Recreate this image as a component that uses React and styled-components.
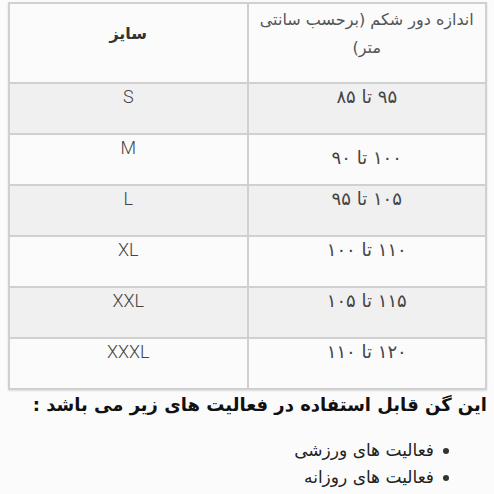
import React from 'react';
import styled, { createGlobalStyle } from 'styled-components';

const GlobalStyle = createGlobalStyle`
  html, body {
    margin: 0;
    padding: 0;
    background: #fbfbfb;
  }
  body {
    font-family: "DejaVu Sans", "Noto Sans", sans-serif;
  }
`;

const Page = styled.div`
  direction: rtl;
  padding: 2px 7px 0 8px;
  color: #222;
`;

const SizeTable = styled.table`
  width: 100%;
  border-collapse: collapse;
  border: 2px solid #d0d0d0;
  box-shadow: 0 1px 2px rgba(0, 0, 0, 0.12);
  direction: ltr;
`;

const Row = styled.tr`
  background: ${(p) => (p.$shaded ? '#f0f0f0' : '#fbfbfb')};
`;

const HeadCell = styled.th`
  width: 50%;
  border: 2px solid #d0d0d0;
  padding: 2px 4px 20px;
  vertical-align: middle;
  text-align: center;
  direction: rtl;
  font-family: "DejaVu Sans", sans-serif;
  font-weight: ${(p) => (p.$bold ? 700 : 400)};
  font-size: 16px;
  line-height: 28px;
  color: ${(p) => (p.$bold ? '#333' : '#555')};
`;

const Cell = styled.td`
  border: 2px solid #d0d0d0;
  padding: ${(p) => (p.$low ? '10px' : '0')} 12px ${(p) => (p.$low ? '14px' : '24px')};
  vertical-align: top;
  text-align: center;
  line-height: 25px;
  font-size: 18px;
  font-family: ${(p) => (p.$latin ? 'Roboto, "Liberation Sans", sans-serif' : '"DejaVu Sans", sans-serif')};
  font-weight: ${(p) => (p.$latin ? 300 : 400)};
  letter-spacing: ${(p) => (p.$latin ? '0' : '1px')};
  color: #444;
  direction: rtl;
`;

const Intro = styled.p`
  margin: 1px 0 0;
  font-size: 18px;
  font-weight: 700;
  line-height: 28px;
  color: #111;
  font-family: "DejaVu Sans", sans-serif;
  white-space: nowrap;
`;

const List = styled.ul`
  margin: 18px 0 0;
  padding: 0 38px 0 0;
  list-style: none;
`;

const Item = styled.li`
  display: flex;
  align-items: center;
  gap: 9px;
  font-size: 17px;
  line-height: 27px;
  color: #222;
  font-family: "DejaVu Sans", sans-serif;
  &::before {
    content: '';
    width: 6px;
    height: 6px;
    border-radius: 50%;
    background: #333;
  }
`;

const rows = [
  { size: 'S', range: '۹۵ تا ۸۵' },
  { size: 'M', range: '۱۰۰ تا ۹۰', low: true },
  { size: 'L', range: '۱۰۵ تا ۹۵' },
  { size: 'XL', range: '۱۱۰ تا ۱۰۰' },
  { size: 'XXL', range: '۱۱۵ تا ۱۰۵' },
  { size: 'XXXL', range: '۱۲۰ تا ۱۱۰' },
];

export default function App() {
  return (
    <Page>
      <GlobalStyle />
      <SizeTable>
        <tbody>
          <Row>
            <HeadCell $bold>سایز</HeadCell>
            <HeadCell>اندازه دور شکم (برحسب سانتی متر)</HeadCell>
          </Row>
          {rows.map((r, i) => (
            <Row key={r.size} $shaded={i % 2 === 0}>
              <Cell $latin>{r.size}</Cell>
              <Cell $low={r.low}>{r.range}</Cell>
            </Row>
          ))}
        </tbody>
      </SizeTable>
      <Intro>این گن قابل استفاده در فعالیت های زیر می باشد :</Intro>
      <List>
        <Item>فعالیت های ورزشی</Item>
        <Item>فعالیت های روزانه</Item>
      </List>
    </Page>
  );
}
